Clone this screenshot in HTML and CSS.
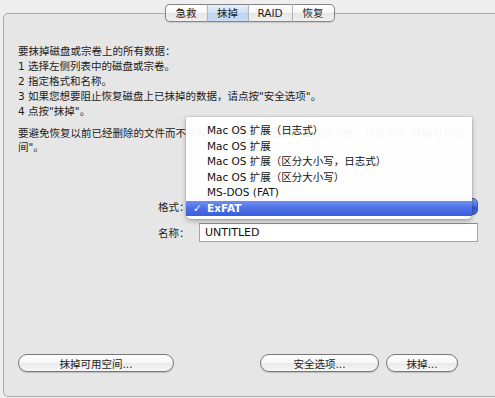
FILE: index.html
```html
<!DOCTYPE html>
<html lang="zh-CN">
<head>
    <meta charset="UTF-8">
    <title>磁盘工具 - 抹掉</title>
    <link rel="stylesheet" href="styles.css">
</head>
<body>
    <div class="tabs">
        <div class="seg">急救</div>
        <div class="seg on">抹掉</div>
        <div class="seg">RAID</div>
        <div class="seg">恢复</div>
    </div>
    <div class="panel">
        <div class="intro">
            <div>要抹掉磁盘或宗卷上的所有数据：</div>
            <div>1 选择左侧列表中的磁盘或宗卷。</div>
            <div>2 指定格式和名称。</div>
            <div>3 如果您想要阻止恢复磁盘上已抹掉的数据，请点按"安全选项"。</div>
            <div>4 点按"抹掉"。</div>
        </div>
        <p class="note">要避免恢复以前已经删除的文件而不抹掉磁盘或宗卷，请选择磁盘或宗卷，然后点按"抹掉可用空间"。</p>

        <div class="form">
            <div class="row">
                <span class="label">格式：</span>
                <div class="popup">
                    <div class="select"></div>
                    <!-- open popup menu -->
                    <ul class="menu">
                        <li>Mac OS 扩展（日志式）</li>
                        <li>Mac OS 扩展</li>
                        <li>Mac OS 扩展（区分大小写，日志式）</li>
                        <li>Mac OS 扩展（区分大小写）</li>
                        <li>MS-DOS (FAT)</li>
                        <li class="picked"><span class="check">✓</span>ExFAT</li>
                    </ul>
                </div>
            </div>
            <div class="row">
                <span class="label">名称：</span>
                <input class="name" type="text" value="UNTITLED">
            </div>
        </div>

        <div class="actions">
            <button class="btn wide">抹掉可用空间...</button>
            <div class="group">
                <button class="btn mid">安全选项...</button>
                <button class="btn small">抹掉...</button>
            </div>
        </div>
    </div>
</body>
</html>
```

FILE: styles.css
```css
body {
    margin: 0;
    background: #eeeeee;
    color: #1c1c1c;
    font-family: "DejaVu Sans", "Noto Sans CJK SC", sans-serif;
    font-size: 10.5px;
    overflow: hidden;
    height: 398px;
}

/* segmented tab control */
.tabs {
    position: relative;
    z-index: 1;
    display: flex;
    justify-content: center;
    margin-top: 4px;
    padding-left: 4px;
    height: 18px;
}
.seg {
    height: 16px;
    line-height: 16px;
    text-align: center;
    border: 1px solid #858585;
    border-left: 1px solid #b4b4b4;
    border-right: none;
    background: linear-gradient(#ffffff, #f5f5f5 50%, #e6e6e6 52%, #f0f0f0);
    box-shadow: 0 1px 1px rgba(0, 0, 0, 0.12);
}
.seg:nth-child(1) { width: 41px; border-left-color: #858585; border-radius: 5px 0 0 5px; }
.seg:nth-child(2) { width: 40px; }
.seg:nth-child(3) { width: 43px; }
.seg:nth-child(4) { width: 41px; border-right: 1px solid #858585; border-radius: 0 5px 5px 0; }
.seg.on {
    background: linear-gradient(#e4eefa, #cfe0f4 50%, #bfd4ef 52%, #cadcf2);
}

.panel {
    width: 460px;
    margin: -9px 0 0 3px;
    padding: 30px 30px 24px 14px;
    background: #e6e6e6;
    border: 1px solid #ababab;
    border-radius: 5px;
}

.intro {
    line-height: 15px;
}
.note {
    margin: 7px 10px 0 0;
    line-height: 14px;
}

.form {
    margin: 44px 0 0 140px;
    display: flex;
    flex-direction: column;
    gap: 8px;
}
.row {
    display: flex;
    align-items: center;
}
.label {
    width: 28px;
    flex: none;
    white-space: nowrap;
}
.popup {
    position: relative;
    flex: 1;
}
.select {
    height: 15px;
    border: 1px solid #3f5a93;
    border-radius: 5px;
    background: linear-gradient(#7d9df2, #4a6fe4 50%, #2f56d2 52%, #4a70e0);
}
.menu {
    position: absolute;
    top: -81px;
    left: 0;
    width: 286px;
    margin: 0;
    padding: 6px 0 3px 0;
    list-style: none;
    background: rgba(255, 255, 255, 0.96);
    border-radius: 0 0 5px 5px;
    box-shadow: 0 2px 5px rgba(0, 0, 0, 0.3), 0 0 0 1px rgba(0, 0, 0, 0.06);
}
.menu li {
    height: 15.5px;
    line-height: 15.5px;
    padding-left: 21px;
    position: relative;
    white-space: nowrap;
    color: #111;
}
.menu li.picked {
    color: #fff;
    font-weight: bold;
    background: linear-gradient(#6f8ff1, #4c6fe6 50%, #3a5fdc);
}
.check {
    position: absolute;
    left: 7px;
}
.name {
    width: 272px;
    height: 17px;
    margin: 0 0 0 13px;
    padding: 0 0 0 5px;
    border: 1px solid #a4a4a4;
    border-top-color: #8c8c8c;
    background: #fff;
    font: inherit;
    font-size: 11px;
    color: #111;
    outline: none;
}

.actions {
    display: flex;
    justify-content: space-between;
    margin-top: 112px;
    padding-right: 20px;
}
.group {
    display: flex;
    gap: 7px;
}
.btn {
    height: 18px;
    padding: 0;
    border: 1px solid #777;
    border-radius: 9px;
    background: linear-gradient(#ffffff, #f6f6f6 50%, #e9e9e9 52%, #f7f7f7);
    box-shadow: 0 1px 1px rgba(0, 0, 0, 0.18);
    font: inherit;
    color: #1c1c1c;
}
.btn.wide { width: 156px; }
.btn.mid { width: 119px; }
.btn.small { width: 72px; }
```
